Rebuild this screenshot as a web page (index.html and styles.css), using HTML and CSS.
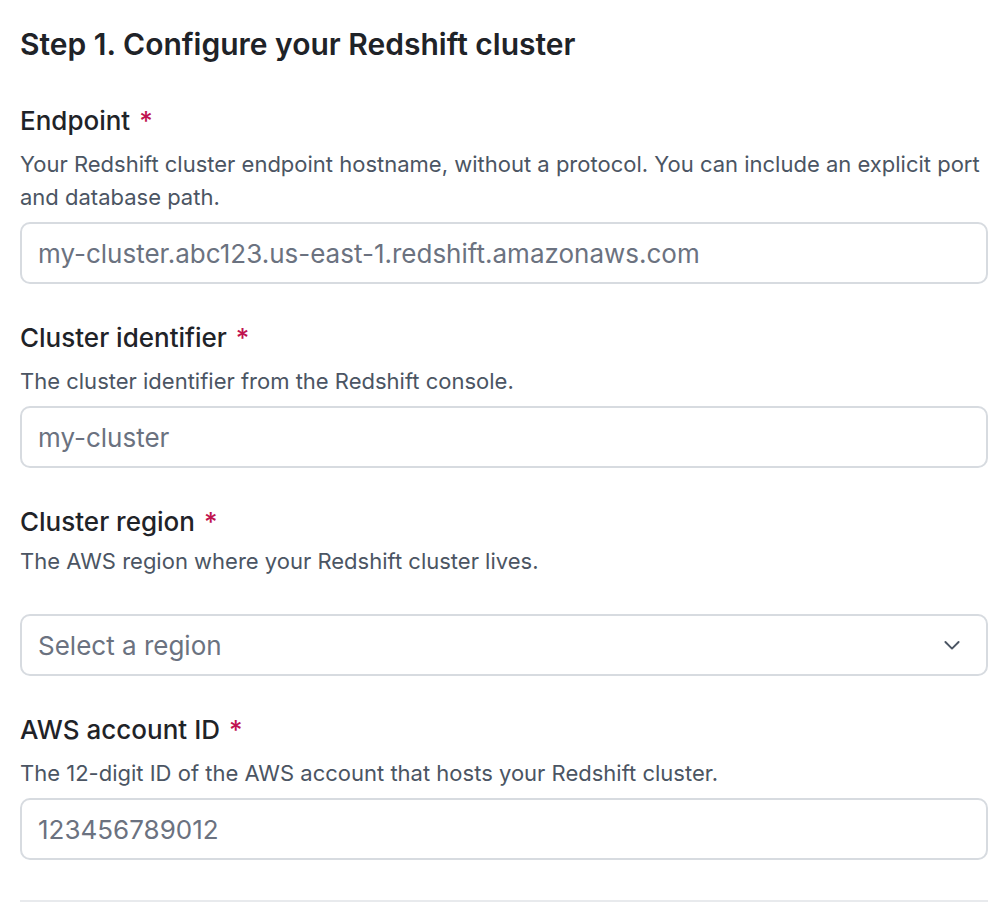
FILE: index.html
```html
<!DOCTYPE html>
<html lang="en">

<head>
    <meta charset="UTF-8">
    <title>Configure Redshift</title>
    <link rel="stylesheet" href="styles.css">
</head>

<body>
    <div class="step">
        <h2 class="step-title">Step 1. Configure your Redshift cluster</h2>

        <div class="field">
            <label class="label" for="endpoint">Endpoint <span class="req">*</span></label>
            <p class="hint">Your Redshift cluster endpoint hostname, without a protocol. You can include an explicit port and database path.</p>
            <input class="input" id="endpoint" type="text" placeholder="my-cluster.abc123.us-east-1.redshift.amazonaws.com">
        </div>

        <div class="field">
            <label class="label" for="cluster">Cluster identifier <span class="req">*</span></label>
            <p class="hint">The cluster identifier from the Redshift console.</p>
            <input class="input" id="cluster" type="text" placeholder="my-cluster">
        </div>

        <div class="field field-select">
            <label class="label" for="region">Cluster region <span class="req">*</span></label>
            <p class="hint">The AWS region where your Redshift cluster lives.</p>
            <div class="select" id="region">
                <span class="select-text">Select a region</span>
                <svg class="chevron" width="24" height="24" viewBox="0 0 20 20" fill="none">
                    <path d="M4.5 7.5l5.5 5.5 5.5-5.5" stroke="#4b5563" stroke-width="1.6" stroke-linecap="round" stroke-linejoin="round"/>
                </svg>
            </div>
        </div>

        <div class="field">
            <label class="label" for="account">AWS account ID <span class="req">*</span></label>
            <p class="hint">The 12-digit ID of the AWS account that hosts your Redshift cluster.</p>
            <input class="input" id="account" type="text" placeholder="123456789012">
        </div>

        <hr class="divider">
    </div>
</body>

</html>
```

FILE: styles.css
```css
html,
body {
    margin: 0;
    padding: 0;
    background: #fff;
}

body {
    font-family: Inter, "Noto Sans", sans-serif;
    color: #1f2328;
}

.step {
    padding: 0 20px;
}

.step-title {
    margin: 0;
    padding-top: 26px;
    font-size: 30px;
    line-height: 36px;
    font-weight: 600;
    color: #1f2328;
}

.field {
    margin-top: 42px;
}

.field + .field {
    margin-top: 37px;
}

.label {
    display: block;
    font-size: 26px;
    line-height: 34px;
    font-weight: 500;
    color: #1f2328;
}

.req {
    color: #c0134f;
    margin-left: 2px;
}

.hint {
    margin: 10px 0 8px;
    font-size: 22px;
    line-height: 33px;
    color: #4b5563;
}

.field-select .hint {
    margin-top: 6px;
}

.input,
.select {
    box-sizing: border-box;
    display: block;
    width: 100%;
    height: 62px;
    padding: 0 16px;
    border: 2px solid #d7dbe0;
    border-radius: 10px;
    font-family: inherit;
    font-size: 26px;
    color: #1f2328;
    background: #fff;
    outline: none;
}

.input::placeholder {
    color: #6b7280;
}

.select {
    display: flex;
    align-items: center;
    justify-content: space-between;
    margin-top: 36px;
    color: #6b7280;
}

.chevron {
    margin-right: 6px;
}

.divider {
    margin: 40px 0 0;
    border: 0;
    border-top: 2px solid #e8eaed;
}
```
